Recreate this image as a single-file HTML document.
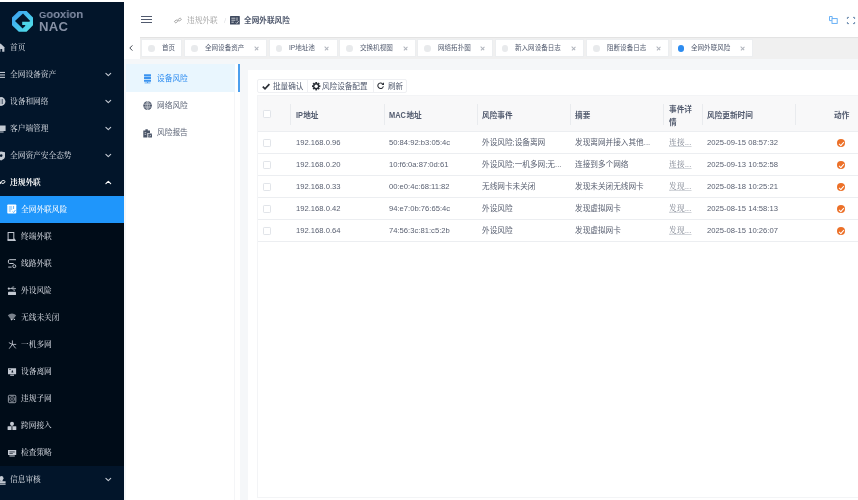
<!DOCTYPE html>
<html lang="zh-CN">
<head>
<meta charset="utf-8">
<title>全网外联风险</title>
<style>
*{box-sizing:border-box;margin:0;padding:0}
html,body{width:858px;height:500px;overflow:hidden;background:#fff}
body{position:relative;font-family:"Liberation Sans","Noto Sans CJK SC",sans-serif;color:#515a6e;font-size:6.6px}
.abs{position:absolute}
#side .it,#lp .mi,.tab span,.row span,.row a,#th span,.btns span,#head .abs,#side>.abs{will-change:transform}
svg{display:block;position:absolute;overflow:visible}

/* ---------- sidebar ---------- */
#side{position:absolute;left:0;top:2px;width:124px;height:498px;background:#02152a;overflow:hidden;
  font-family:"Liberation Serif","Noto Serif CJK SC",serif;font-size:7.7px;font-weight:500;color:#cbd0d8}
#side .sub{position:absolute;left:0;top:193.5px;width:124px;height:270px;background:#000c18}
#side .act{position:absolute;left:0;top:193.5px;width:124px;height:27px;background:#1f96fb}
#side .it{position:absolute;left:10px;height:27px;line-height:27px;white-space:nowrap}
#side .it.s{left:21px}
#side .it.b{font-weight:700;color:#fff}
#side .it.w{color:#fff}
#side .chev{position:absolute;left:105.5px;width:5px;height:3px}

/* ---------- header ---------- */
#head{position:absolute;left:124px;top:2px;width:734px;height:35px;background:#fff}
#tabs{position:absolute;left:139.5px;top:37px;width:719px;height:22px;background:#f0f0f0;white-space:nowrap;overflow:hidden;box-shadow:inset 0 1px 1px rgba(0,0,0,.06)}
.tab{position:absolute;top:39px;height:18px;background:#fff;border:1px solid #eceef0;line-height:16px;font-size:6.55px;color:#515a6e}
.tab i{position:absolute;left:6px;top:5px;width:6.5px;height:6.5px;border-radius:50%;background:#e8eaec}
.tab i.on{background:#2d8cf0}
.tab span{position:absolute;left:19.5px;top:0.3px;white-space:nowrap}
.tab b{position:absolute;right:7.2px;top:5.6px;width:4.6px;height:4.6px}
.tab b:before,.tab b:after{content:"";position:absolute;left:-0.4px;top:2px;width:5.4px;height:0.6px;background:#b0b4bc;transform:rotate(45deg)}
.tab b:after{transform:rotate(-45deg)}

/* ---------- content ---------- */
#bg{position:absolute;left:124px;top:59px;width:734px;height:441px;background:#f5f7f9}
#lp{position:absolute;left:126px;top:64px;width:114px;height:436px;background:#fff}
#lp .sel{position:absolute;left:0;top:0;width:108.6px;height:27.6px;background:#e9f6fe}
#lp .bar{position:absolute;left:112px;top:0;width:2px;height:28px;background:#4b9fee}
#lp .ln{position:absolute;left:108px;top:28px;width:1px;height:408px;background:#f4f5f7}
#lp .mi{position:absolute;left:31px;height:27px;line-height:27px;font-size:7.7px;color:#5b6375;white-space:nowrap}
#rp{position:absolute;left:248px;top:70px;width:610px;height:430px;background:#fff}

.btns{position:absolute;left:9.3px;top:9.2px;height:13.6px;width:150px;border:1px solid #eff0f3;border-radius:2px;background:#fff}
.btns .sp{position:absolute;top:0;width:1px;height:100%;background:#eff0f3}
.btns span{position:absolute;top:0.9px;line-height:12px;font-size:7.6px;color:#515a6e;white-space:nowrap}

#tbl{position:absolute;left:8.9px;top:24.6px;width:640px;height:403.4px;border:1px solid #f3f4f6;border-right:0}
#th{position:absolute;left:0;top:0;width:640px;height:36px;background:#f8f8f9;border-bottom:1px solid #eceef1}
#th span{position:absolute;font-weight:700;font-size:7.65px;color:#515a6e;line-height:12px;white-space:nowrap}
#th em{display:inline-block;font-style:normal;transform:scale(0.97,1.2);transform-origin:0 76%}
#th u{position:absolute;top:8.4px;height:21px;width:1px;background:#e9ebee;text-decoration:none}
.row{position:absolute;left:0;width:640px;height:22px;border-bottom:1px solid #eceef1;font-size:7.65px;line-height:21.8px;color:#5a6172}
.row span{position:absolute;top:0;white-space:nowrap}
.row a{position:absolute;top:0;white-space:nowrap;letter-spacing:0.3px;color:#7d8390;font-family:'Liberation Serif','Noto Serif CJK SC',serif;text-decoration:underline;text-decoration-color:#d3d6db;text-underline-offset:1.2px;text-decoration-thickness:0.6px}
.cb{position:absolute;left:5.2px;width:7.7px;height:7.7px;border:1px solid #e1e4e9;border-radius:1.2px;background:#fff}
.ok{position:absolute;left:579.5px;top:7.9px;width:8px;height:8px;border-radius:50%;background:#ec7028}
.ok:after{content:"";position:absolute;left:2.1px;top:2.2px;width:3.6px;height:1.9px;border-left:1.2px solid #fff;border-bottom:1.2px solid #fff;transform:rotate(-48deg)}
</style>
</head>
<body>

<!-- ================= SIDEBAR ================= -->
<div id="side">
  <svg style="left:12px;top:8.5px" width="21" height="20.7" viewBox="0 0 21 20.7">
    <defs><linearGradient id="lg" x1="0" y1="0" x2="1" y2="1"><stop offset="0" stop-color="#3d9cf0"/><stop offset="0.55" stop-color="#46c4ee"/><stop offset="1" stop-color="#55e6e6"/></linearGradient></defs>
    <path d="M6.8 0 L14.6 0 L21 6.6 L21 14.3 L14.6 20.7 L6.8 20.7 L0 14.3 L0 6.6 Z" fill="url(#lg)"/>
    <path d="M11 2.6 L18.2 9.9 L10.6 17.5 L3 9.9 Z" fill="#02152a"/>
    <path d="M10.2 10.7 L21 10.7 L21 13.9 L14.4 13.9 L13.2 15.3 L13.2 13.9 L10.2 13.9 Z" fill="#4fd6ea"/>
  </svg>
  <div class="abs" style="left:38.8px;top:5.1px;font:700 11.8px/14px 'Liberation Sans',sans-serif;color:#838ea6;white-space:nowrap;transform:scaleX(0.95);transform-origin:0 0" id="gx"><span style="font-size:9.9px">G</span>ooxion</div>
  <div class="abs" style="left:38.8px;top:17.7px;font:700 12.4px/14px 'Liberation Sans',sans-serif;color:#8791a5;letter-spacing:0.2px;transform:scaleX(1.06);transform-origin:0 0">NAC</div>

  <div class="sub"></div>
  <div class="act"></div>
  <svg style="left:0;top:0" width="124" height="498" viewBox="0 0 124 498">
  <!-- top-level icons (partly clipped at the left edge) -->
  <g fill="#c3c9d2" stroke="none">
    <path d="M-4 45.8 L0.5 41.6 L5 45.8 L4.4 45.8 L4.4 49.8 L2.2 49.8 L2.2 47 L0.4 47 L0.4 49.8 L-3 49.8 L-3 45.8 Z"/>
    <rect x="-4" y="69.9" width="9" height="1.1"/><rect x="-4" y="72.4" width="9" height="1.1"/><rect x="-4" y="74.8" width="9" height="1.1"/>
    <circle cx="1" cy="99.5" r="4.4"/>
    <path d="M-4 123.6 h9.6 v5.4 h-9.6 Z M-2 129.6 h5.6 v0.9 h-5.6 Z"/>
    <path d="M-2.6 150.3 L1.2 149.6 L5 150.3 L5 154.6 Q5 157 1.2 158.4 Q-2.6 157 -2.6 154.6 Z"/>
    <circle cx="1.4" cy="476.2" r="2.1"/><rect x="0.2" y="477.4" width="2.4" height="2.2"/><path d="M-4 479.2 h9.6 v2.4 h-9.6 Z M-4 482.2 h9.6 v0.9 h-9.6 Z"/>
  </g>
  <g fill="#02152a"><rect x="-0.6" y="97" width="0.7" height="5"/><rect x="1.8" y="97" width="0.7" height="5"/><circle cx="1.2" cy="153.6" r="1.3"/></g>
  <g transform="rotate(-18 1 180.4)"><rect x="-3.4" y="179.4" width="4.4" height="2.4" rx="1.2" fill="#fff"/><rect x="1.2" y="179.3" width="3.8" height="2.6" rx="1.3" fill="none" stroke="#fff" stroke-width="0.9"/></g>

  <g fill="none" stroke="#c3c9d2" stroke-width="1.1" stroke-linecap="round" stroke-linejoin="round">
    <path d="M105.9 71.3 L108.3 73.7 L110.7 71.3"/>
    <path d="M105.9 98.3 L108.3 100.7 L110.7 98.3"/>
    <path d="M105.9 125.3 L108.3 127.7 L110.7 125.3"/>
    <path d="M105.9 152.3 L108.3 154.7 L110.7 152.3"/>
    <path d="M105.9 476.3 L108.3 478.7 L110.7 476.3"/>
    <path d="M105.9 181.7 L108.3 179.3 L110.7 181.7" stroke="#fff"/>
  </g>
  <!-- active sub item icon -->
  <g>
    <rect x="7.3" y="202.5" width="9" height="9" rx="0.8" fill="#fff"/>
    <path d="M8.8 205 h3.4 M8.8 207 h3.4 M8.8 209 h2 M13.6 204 v3 M12.6 209.5 l1 1 l1.8 -2.4" stroke="#1f96fb" stroke-width="0.7" fill="none"/>
  </g>
  <!-- sub item icons -->
  <g fill="none" stroke="#c3c9d2" stroke-width="1">
    <rect x="8.1" y="230.5" width="5.7" height="7.6"/>
    <path d="M16 257.7 H9.6 Q8.4 257.7 8.4 258.9 V260.3 Q8.4 261.5 9.6 261.5 H13.6 M8.2 265.1 H11.6"/><circle cx="14.3" cy="264.2" r="1.5"/>
    <path d="M9 286.6 H16 M11 286.6 L12.8 285 H14.2 M12.2 286.6 L13.8 288.2 H15" stroke-width="0.8"/>
    <path d="M12.4 342.4 V338.8 M12.4 342.4 L9.2 340.8 M12.4 342.4 H15.8 M12.4 342.4 L9.4 346.4 M12.4 342.4 L15.5 346.1" stroke-width="0.95" stroke-linecap="round" opacity="0.9"/>
    <rect x="8.4" y="393.3" width="7.4" height="7.4" rx="1" stroke-width="0.9" opacity="0.85"/><circle cx="12.1" cy="397" r="2.5" stroke-width="0.7" opacity="0.8"/><circle cx="12.1" cy="397" r="1" stroke-width="0.6" opacity="0.8"/>
  </g>
  <g fill="#c3c9d2">
    <rect x="7.6" y="237.2" width="6.7" height="1.7"/><path d="M13.2 238.9 L14.6 236.2 L16 238.9 Z"/>
    <circle cx="8.8" cy="286.6" r="1.1"/><rect x="8" y="289.8" width="8" height="3.3" rx="0.7"/>
    <path d="M7.8 313.3 Q12 309.6 16.2 313.3 L12.6 318 L11.4 318 Z" opacity="0.62"/><circle cx="11.5" cy="317.6" r="0.8"/><circle cx="14.4" cy="317.4" r="0.7"/>
    <path d="M8 366.2 h8.1 v6 h-8.1 Z M10.2 372.8 h3.8 v1 h-3.8 Z"/>
    <circle cx="12" cy="421.7" r="2"/><rect x="7.6" y="424.3" width="3.9" height="3.6" rx="0.5"/><rect x="12.4" y="424.3" width="3.9" height="3.6" rx="0.5"/><rect x="11.5" y="422.6" width="1" height="2"/>
    <path d="M8 448 h8.2 v5 h-8.2 Z M9.4 453.4 h5.4 v1 h-5.4 Z"/>
  </g>
  <g fill="#000c18"><path d="M11.4 370.6 L12.2 367.8 L13.4 370.6 Z"/><rect x="9.2" y="367.4" width="1.6" height="0.6"/><rect x="9.4" y="449.6" width="5.4" height="0.7"/><rect x="9.4" y="451" width="3.4" height="0.6"/></g>
  </svg>

  <div class="it" style="top:31.5px">首页</div>
  <div class="it" style="top:58.5px">全网设备资产</div>
  <div class="it" style="top:85.5px">设备和网络</div>
  <div class="it" style="top:112.5px">客户端管理</div>
  <div class="it" style="top:139.5px">全网资产安全态势</div>
  <div class="it b" style="top:166.5px">违规外联</div>
  <div class="it s w" style="top:193.5px">全网外联风险</div>
  <div class="it s" style="top:220.5px">终端外联</div>
  <div class="it s" style="top:247.5px">线路外联</div>
  <div class="it s" style="top:274.5px">外设风险</div>
  <div class="it s" style="top:301.5px">无线未关闭</div>
  <div class="it s" style="top:328.5px">一机多网</div>
  <div class="it s" style="top:355.5px">设备离网</div>
  <div class="it s" style="top:382.5px">违规子网</div>
  <div class="it s" style="top:409.5px">跨网接入</div>
  <div class="it s" style="top:436.5px">检查策略</div>
  <div class="it" style="top:463.5px">信息审核</div>
</div>

<!-- ================= HEADER ================= -->
<div id="head">
  <svg style="left:17px;top:13.7px" width="11" height="8" viewBox="0 0 11 8"><path d="M0 0.55h11M0 3.5h11M0 6.5h11" stroke="#515a6e" stroke-width="1.1" fill="none"/></svg>
  <svg style="left:50px;top:16.2px" width="8" height="5.3" viewBox="0 0 9 6"><g fill="none" stroke="#9a9a9a" stroke-width="0.9"><rect x="0.6" y="2.6" width="3.6" height="2.4" rx="1.2" transform="rotate(-28 2.4 3.8)"/><rect x="4.6" y="0.6" width="3.6" height="2.4" rx="1.2" transform="rotate(-28 6.4 1.8)"/></g></svg>
  <svg style="left:106.4px;top:14px" width="10" height="9" viewBox="0 0 10 9"><rect x="0" y="0" width="9.8" height="8.6" rx="0.6" fill="#3f4a5f"/><path d="M1.4 2.2 h4 M1.4 4.2 h4 M1.4 6.2 h2.4 M7 1.4 v3.4 M5.8 6.4 l1 1 l1.8 -2.2" stroke="#fff" stroke-width="0.7" fill="none"/></svg>
  <svg style="left:705.2px;top:14.2px" width="9" height="8" viewBox="0 0 9 8"><g fill="none" stroke="#5aa9f5" stroke-width="0.9"><path d="M3.2 2.6 V0.5 H0.5 V4.6 H2.8"/><rect x="3" y="2.6" width="5.2" height="4.8"/></g></svg>
  <svg style="left:723px;top:14.8px" width="8" height="7" viewBox="0 0 8 7"><g fill="none" stroke="#5b7ea6" stroke-width="0.9"><path d="M0.4 2 V0.4 H2 M6 0.4 H7.6 V2 M7.6 5 V6.6 H6 M2 6.6 H0.4 V5"/></g></svg>
  <div class="abs" style="left:63px;top:11.5px;line-height:14px;font-size:7.65px;color:#999;font-family:'Liberation Serif','Noto Serif CJK SC',serif;white-space:nowrap">违规外联</div>
  <div class="abs" style="left:99.5px;top:11.5px;line-height:14px;font-size:7.6px;color:#dcdee2">/</div>
  <div class="abs" style="left:120px;top:11.5px;line-height:14px;font-size:7.65px;font-weight:700;color:#515a6e;white-space:nowrap">全网外联风险</div>
</div>

<div class="abs" style="left:124px;top:37px;width:15.5px;height:22px;background:#fff"><svg style="left:5.4px;top:7.6px" width="4" height="6" viewBox="0 0 4 6"><path d="M3.4 0.4 L0.8 3 L3.4 5.6" fill="none" stroke="#3a3f4a" stroke-width="0.95"/></svg></div>
<div id="tabs"></div>
<div class="tab" style="left:141.4px;width:40.4px"><i></i><span>首页</span></div>
<div class="tab" style="left:184px;width:82.7px"><i></i><span>全网设备资产</span><b></b></div>
<div class="tab" style="left:268.5px;width:69px"><i></i><span>IP地址池</span><b></b></div>
<div class="tab" style="left:339.4px;width:76.3px"><i></i><span>交换机视图</span><b></b></div>
<div class="tab" style="left:417px;width:76px"><i></i><span>网络拓扑图</span><b></b></div>
<div class="tab" style="left:494.6px;width:89.5px"><i></i><span>新入网设备日志</span><b></b></div>
<div class="tab" style="left:586px;width:82.7px"><i></i><span>阻断设备日志</span><b></b></div>
<div class="tab" style="left:670.6px;width:82.5px"><i class="on"></i><span>全网外联风险</span><b></b></div>

<!-- ================= CONTENT ================= -->
<div id="bg"></div>
<div id="lp">
  <div class="sel"></div><div class="bar"></div><div class="ln"></div>
  <svg style="left:0;top:0" width="113" height="90" viewBox="0 0 113 90">
    <g fill="#3a93f0"><rect x="18" y="10.3" width="7" height="2.1" rx="0.3"/><rect x="18" y="13" width="7" height="2.1" rx="0.3"/><rect x="18" y="15.7" width="7" height="2.1" rx="0.3"/><rect x="21.1" y="17.8" width="0.8" height="1.2"/><rect x="18.6" y="18.6" width="5.8" height="0.7"/></g>
    <circle cx="21.6" cy="41.6" r="4.3" fill="#4b5568"/>
    <g stroke="#e9ebef" stroke-width="0.6" fill="none"><ellipse cx="21.6" cy="41.6" rx="1.7" ry="4.1"/><path d="M21.6 37.4 V45.8 M17.6 40.2 H25.6 M17.6 43 H25.6"/></g>
    <g fill="#4b5568"><path d="M17.3 66.6 H19.4 V65.3 H21.8 V66.6 H24 V69 H21.4 V73.4 H17.3 Z"/><rect x="22.2" y="69.6" width="3.8" height="3.8" rx="0.5"/></g>
    <path d="M18.6 68.6 h1.6 M18.6 70.4 h1.6 M23 71.5 l0.8 0.8 l1.3 -1.6" stroke="#fff" stroke-width="0.6" fill="none"/>
  </svg>
  <div class="mi" style="top:0.5px;color:#2d8cf0">设备风险</div>
  <div class="mi" style="top:27.5px">网络风险</div>
  <div class="mi" style="top:54.5px">风险报告</div>
</div>

<div id="rp">
  <div class="btns">
    <div class="sp" style="left:48.4px"></div><div class="sp" style="left:114.6px"></div>
    <svg style="left:3.6px;top:3px" width="8" height="7" viewBox="0 0 8 7"><path d="M0.8 3.6 L3 5.8 L7.4 1.2" fill="none" stroke="#2b2f36" stroke-width="1.7"/></svg>
    <svg style="left:53.6px;top:2.2px" width="8.4" height="8.4" viewBox="-4.2 -4.2 8.4 8.4"><g fill="#2b2f36"><circle r="3"/><rect x="-0.9" y="-4.2" width="1.8" height="8.4"/><rect x="-0.9" y="-4.2" width="1.8" height="8.4" transform="rotate(45)"/><rect x="-0.9" y="-4.2" width="1.8" height="8.4" transform="rotate(90)"/><rect x="-0.9" y="-4.2" width="1.8" height="8.4" transform="rotate(135)"/></g><circle r="1.7" fill="#fff"/></svg>
    <svg style="left:118.6px;top:2.1px" width="7.4" height="7.4" viewBox="0 0 8 8"><path d="M6.9 4.6 A3 3 0 1 1 6 1.9" fill="none" stroke="#2b2f36" stroke-width="1.15"/><path d="M7.6 0.4 V3.2 H4.8 Z" fill="#2b2f36"/></svg>
    <span style="left:14.7px">批量确认</span>
    <span style="left:63.7px">风险设备配置</span>
    <span style="left:129.4px">刷新</span>
  </div>
  <div id="tbl">
    <div id="th">
      <div class="cb" style="top:14.3px"></div>
      <u style="left:32.5px"></u><u style="left:125.7px"></u><u style="left:219px"></u><u style="left:312px"></u><u style="left:405.5px"></u><u style="left:443.7px"></u><u style="left:537.5px"></u>
      <span style="left:38px;top:14.8px"><em>IP</em>地址</span>
      <span style="left:131.5px;top:14.8px"><em>MAC</em>地址</span>
      <span style="left:224.5px;top:14.8px">风险事件</span>
      <span style="left:317.5px;top:14.8px">摘要</span>
      <span style="left:411px;top:8.1px">事件详</span>
      <span style="left:411px;top:21.4px">情</span>
      <span style="left:449px;top:14.8px">风险更新时间</span>
      <span style="left:576px;top:14.8px">动作</span>
    </div>
    <div class="row" style="top:36px"><div class="cb" style="top:7.3px"></div><span style="left:38px">192.168.0.96</span><span style="left:131.5px">50:84:92:b3:05:4c</span><span style="left:224.5px">外设风险;设备离网</span><span style="left:317.5px">发现离网并接入其他...</span><a style="left:411px">连接...</a><span style="left:449px">2025-09-15 08:57:32</span><div class="ok"></div></div>
    <div class="row" style="top:58px"><div class="cb" style="top:7.3px"></div><span style="left:38px">192.168.0.20</span><span style="left:131.5px">10:f6:0a:87:0d:61</span><span style="left:224.5px">外设风险;一机多网;无...</span><span style="left:317.5px">连接到多个网络</span><a style="left:411px">连接...</a><span style="left:449px">2025-09-13 10:52:58</span><div class="ok"></div></div>
    <div class="row" style="top:80px"><div class="cb" style="top:7.3px"></div><span style="left:38px">192.168.0.33</span><span style="left:131.5px">00:e0:4c:68:11:82</span><span style="left:224.5px">无线网卡未关闭</span><span style="left:317.5px">发现未关闭无线网卡</span><a style="left:411px">发现...</a><span style="left:449px">2025-08-18 10:25:21</span><div class="ok"></div></div>
    <div class="row" style="top:102px"><div class="cb" style="top:7.3px"></div><span style="left:38px">192.168.0.42</span><span style="left:131.5px">94:e7:0b:76:65:4c</span><span style="left:224.5px">外设风险</span><span style="left:317.5px">发现虚拟网卡</span><a style="left:411px">发现...</a><span style="left:449px">2025-08-15 14:58:13</span><div class="ok"></div></div>
    <div class="row" style="top:124px"><div class="cb" style="top:7.3px"></div><span style="left:38px">192.168.0.64</span><span style="left:131.5px">74:56:3c:81:c5:2b</span><span style="left:224.5px">外设风险</span><span style="left:317.5px">发现虚拟网卡</span><a style="left:411px">发现...</a><span style="left:449px">2025-08-15 10:26:07</span><div class="ok"></div></div>
  </div>
</div>

</body>
</html>
